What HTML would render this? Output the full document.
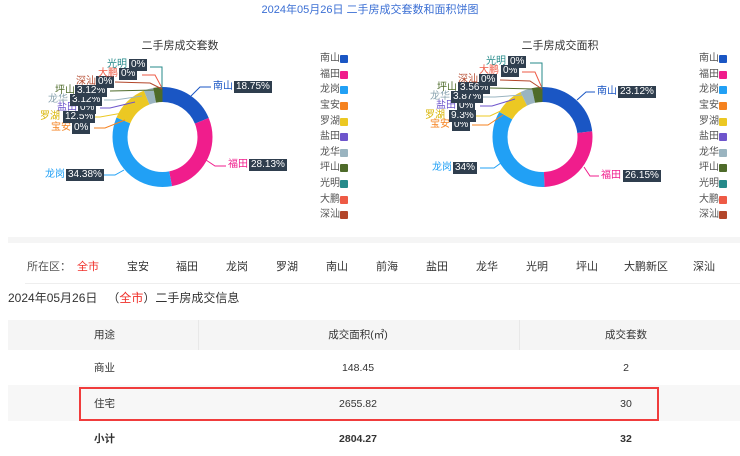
<!DOCTYPE html>
<html><head><meta charset="utf-8"><style>
body{margin:0;width:740px;height:456px;background:#fff;font-family:"Liberation Sans","Noto Sans CJK SC",sans-serif;position:relative;overflow:hidden;color:#333}
.a{position:absolute;white-space:nowrap;font-size:10px;line-height:12px}
.b{position:absolute;background:#2f3e4e;color:#fff;font-size:10px;line-height:12px;padding:0 2px;white-space:nowrap}
.lg{position:absolute;font-size:10px;color:#555;line-height:12px}
.sq{position:absolute;width:8px;height:8px;border-radius:1px}
.f{position:absolute;top:258px;font-size:11px;color:#333}
</style></head><body>
<div class="a" style="left:0;width:740px;text-align:center;top:4px;font-size:11px;color:#3b6fd4">2024年05月26日 二手房成交套数和面积饼图</div>
<div class="a" style="left:140px;width:80px;text-align:center;top:40px;font-size:11px;color:#333">二手房成交套数</div>
<div class="a" style="left:520px;width:80px;text-align:center;top:40px;font-size:11px;color:#333">二手房成交面积</div>

<svg width="740" height="240" style="position:absolute;left:0;top:0">
<g transform="rotate(-90 162.5 137)" fill="none" stroke-width="15">
<circle cx="162.5" cy="137" r="42.5" stroke="#1a56c4" stroke-dasharray="50.07 300" stroke-dashoffset="0"/>
<circle cx="162.5" cy="137" r="42.5" stroke="#f01d8c" stroke-dasharray="75.12 300" stroke-dashoffset="-50.07"/>
<circle cx="162.5" cy="137" r="42.5" stroke="#21a0f5" stroke-dasharray="91.81 300" stroke-dashoffset="-125.19"/>
<circle cx="162.5" cy="137" r="42.5" stroke="#ecc823" stroke-dasharray="33.38 300" stroke-dashoffset="-217.0"/>
<circle cx="162.5" cy="137" r="42.5" stroke="#9ab4c0" stroke-dasharray="8.33 300" stroke-dashoffset="-250.38"/>
<circle cx="162.5" cy="137" r="42.5" stroke="#4e6b2a" stroke-dasharray="8.33 300" stroke-dashoffset="-258.71"/>
</g>
<g transform="rotate(-90 542.5 137)" fill="none" stroke-width="15">
<circle cx="542.5" cy="137" r="42.5" stroke="#1a56c4" stroke-dasharray="61.74 300" stroke-dashoffset="0"/>
<circle cx="542.5" cy="137" r="42.5" stroke="#f01d8c" stroke-dasharray="69.83 300" stroke-dashoffset="-61.74"/>
<circle cx="542.5" cy="137" r="42.5" stroke="#21a0f5" stroke-dasharray="90.79 300" stroke-dashoffset="-131.57"/>
<circle cx="542.5" cy="137" r="42.5" stroke="#ecc823" stroke-dasharray="24.83 300" stroke-dashoffset="-222.36"/>
<circle cx="542.5" cy="137" r="42.5" stroke="#9ab4c0" stroke-dasharray="10.33 300" stroke-dashoffset="-247.19"/>
<circle cx="542.5" cy="137" r="42.5" stroke="#4e6b2a" stroke-dasharray="9.51 300" stroke-dashoffset="-257.52"/>
</g>
<g fill="none" stroke-width="1">
<polyline points="191,96 200,87 211,87" stroke="#1a56c4"/>
<polyline points="206,160 215,166 226,166" stroke="#f01d8c"/>
<polyline points="124,170 115,175 104,175" stroke="#21a0f5"/>
<polyline points="125,120 105,128 94,128" stroke="#f5821f"/>
<polyline points="128,112 100,117 95,117" stroke="#ecc823"/>
<polyline points="135,102 110,108 100,108" stroke="#6e55cc"/>
<polyline points="142,96 115,100 104,100" stroke="#9ab4c0"/>
<polyline points="155,90 110,91" stroke="#4e6b2a"/>
<polyline points="162,89 150,83 115,82" stroke="#b3462a"/>
<polyline points="162,88 155,75 142,75" stroke="#ee5a45"/>
<polyline points="162,88 162,67 150,67" stroke="#268a8a"/>
<polyline points="577,100 586,92 595,92" stroke="#1a56c4"/>
<polyline points="584,167 590,176 599,176" stroke="#f01d8c"/>
<polyline points="505,160 494,168 480,168" stroke="#21a0f5"/>
<polyline points="503,115 488,125 472,125" stroke="#f5821f"/>
<polyline points="507,108 490,116 475,116" stroke="#ecc823"/>
<polyline points="515,99 492,106 480,106" stroke="#6e55cc"/>
<polyline points="522,95 495,97 483,97" stroke="#9ab4c0"/>
<polyline points="535,89 490,88" stroke="#4e6b2a"/>
<polyline points="542,89 530,81 500,80" stroke="#b3462a"/>
<polyline points="542,88 535,72 522,72" stroke="#ee5a45"/>
<polyline points="542,88 542,63 530,63" stroke="#268a8a"/>
</g>
</svg>

<span class="a" style="left:213px;top:81px;color:#1a56c4">南山</span><span class="b" style="left:234px;top:81px">18.75%</span>
<span class="a" style="left:228px;top:159px;color:#f01d8c">福田</span><span class="b" style="left:249px;top:159px">28.13%</span>
<span class="a" style="left:45px;top:169px;color:#21a0f5">龙岗</span><span class="b" style="left:66px;top:169px">34.38%</span>
<span class="a" style="left:51px;top:122px;color:#f5821f">宝安</span><span class="b" style="left:72px;top:122px">0%</span>
<span class="a" style="left:40px;top:111px;color:#d8b400">罗湖</span><span class="b" style="left:63px;top:111px">12.5%</span>
<span class="a" style="left:57px;top:102px;color:#6e55cc">盐田</span><span class="b" style="left:78px;top:102px">0%</span>
<span class="a" style="left:48px;top:94px;color:#8aa4b0">龙华</span><span class="b" style="left:70px;top:94px">3.12%</span>
<span class="a" style="left:55px;top:85px;color:#4e6b2a">坪山</span><span class="b" style="left:75px;top:85px">3.12%</span>
<span class="a" style="left:76px;top:76px;color:#b3462a">深汕</span><span class="b" style="left:96px;top:76px">0%</span>
<span class="a" style="left:98px;top:68px;color:#ee5a45">大鹏</span><span class="b" style="left:119px;top:68px">0%</span>
<span class="a" style="left:107px;top:59px;color:#268a8a">光明</span><span class="b" style="left:129px;top:59px">0%</span>

<span class="a" style="left:597px;top:86px;color:#1a56c4">南山</span><span class="b" style="left:618px;top:86px">23.12%</span>
<span class="a" style="left:601px;top:170px;color:#f01d8c">福田</span><span class="b" style="left:623px;top:170px">26.15%</span>
<span class="a" style="left:432px;top:162px;color:#21a0f5">龙岗</span><span class="b" style="left:453px;top:162px">34%</span>
<span class="a" style="left:430px;top:119px;color:#f5821f">宝安</span><span class="b" style="left:452px;top:119px">0%</span>
<span class="a" style="left:425px;top:110px;color:#d8b400">罗湖</span><span class="b" style="left:449px;top:110px">9.3%</span>
<span class="a" style="left:436px;top:100px;color:#6e55cc">盐田</span><span class="b" style="left:457px;top:100px">0%</span>
<span class="a" style="left:430px;top:91px;color:#8aa4b0">龙华</span><span class="b" style="left:451px;top:91px">3.87%</span>
<span class="a" style="left:437px;top:82px;color:#4e6b2a">坪山</span><span class="b" style="left:458px;top:82px">3.56%</span>
<span class="a" style="left:458px;top:74px;color:#b3462a">深汕</span><span class="b" style="left:479px;top:74px">0%</span>
<span class="a" style="left:479px;top:65px;color:#ee5a45">大鹏</span><span class="b" style="left:501px;top:65px">0%</span>
<span class="a" style="left:486px;top:56px;color:#268a8a">光明</span><span class="b" style="left:508px;top:56px">0%</span>

<div class="lg" style="left:320px;top:53px">南山</div><div class="sq" style="left:340px;top:55px;background:#1a56c4"></div>
<div class="lg" style="left:320px;top:69px">福田</div><div class="sq" style="left:340px;top:71px;background:#f01d8c"></div>
<div class="lg" style="left:320px;top:84px">龙岗</div><div class="sq" style="left:340px;top:86px;background:#21a0f5"></div>
<div class="lg" style="left:320px;top:100px">宝安</div><div class="sq" style="left:340px;top:102px;background:#f5821f"></div>
<div class="lg" style="left:320px;top:116px">罗湖</div><div class="sq" style="left:340px;top:118px;background:#ecc823"></div>
<div class="lg" style="left:320px;top:131px">盐田</div><div class="sq" style="left:340px;top:133px;background:#6e55cc"></div>
<div class="lg" style="left:320px;top:147px">龙华</div><div class="sq" style="left:340px;top:149px;background:#9ab4c0"></div>
<div class="lg" style="left:320px;top:162px">坪山</div><div class="sq" style="left:340px;top:164px;background:#4e6b2a"></div>
<div class="lg" style="left:320px;top:178px">光明</div><div class="sq" style="left:340px;top:180px;background:#268a8a"></div>
<div class="lg" style="left:320px;top:194px">大鹏</div><div class="sq" style="left:340px;top:196px;background:#ee5a45"></div>
<div class="lg" style="left:320px;top:209px">深汕</div><div class="sq" style="left:340px;top:211px;background:#b3462a"></div>

<div class="lg" style="left:699px;top:53px">南山</div><div class="sq" style="left:719px;top:55px;background:#1a56c4"></div>
<div class="lg" style="left:699px;top:69px">福田</div><div class="sq" style="left:719px;top:71px;background:#f01d8c"></div>
<div class="lg" style="left:699px;top:84px">龙岗</div><div class="sq" style="left:719px;top:86px;background:#21a0f5"></div>
<div class="lg" style="left:699px;top:100px">宝安</div><div class="sq" style="left:719px;top:102px;background:#f5821f"></div>
<div class="lg" style="left:699px;top:116px">罗湖</div><div class="sq" style="left:719px;top:118px;background:#ecc823"></div>
<div class="lg" style="left:699px;top:131px">盐田</div><div class="sq" style="left:719px;top:133px;background:#6e55cc"></div>
<div class="lg" style="left:699px;top:147px">龙华</div><div class="sq" style="left:719px;top:149px;background:#9ab4c0"></div>
<div class="lg" style="left:699px;top:162px">坪山</div><div class="sq" style="left:719px;top:164px;background:#4e6b2a"></div>
<div class="lg" style="left:699px;top:178px">光明</div><div class="sq" style="left:719px;top:180px;background:#268a8a"></div>
<div class="lg" style="left:699px;top:194px">大鹏</div><div class="sq" style="left:719px;top:196px;background:#ee5a45"></div>
<div class="lg" style="left:699px;top:209px">深汕</div><div class="sq" style="left:719px;top:211px;background:#b3462a"></div>

<div style="position:absolute;left:8px;top:237px;width:732px;height:6px;background:#f5f5f5"></div>

<span class="f" style="left:27px;color:#555">所在区：</span>
<span class="f" style="left:77px;color:#f0302a">全市</span>
<span class="f" style="left:127px">宝安</span>
<span class="f" style="left:176px">福田</span>
<span class="f" style="left:226px">龙岗</span>
<span class="f" style="left:276px">罗湖</span>
<span class="f" style="left:326px">南山</span>
<span class="f" style="left:376px">前海</span>
<span class="f" style="left:426px">盐田</span>
<span class="f" style="left:476px">龙华</span>
<span class="f" style="left:526px">光明</span>
<span class="f" style="left:576px">坪山</span>
<span class="f" style="left:624px">大鹏新区</span>
<span class="f" style="left:693px">深汕</span>
<div style="position:absolute;left:25px;top:283px;width:715px;height:1px;background:#eee"></div>

<div class="a" style="left:8px;top:291px;font-size:12px;line-height:14px;color:#333">2024年05月26日 &nbsp;&nbsp;（<span style="color:#f0302a">全市</span>）二手房成交信息</div>

<div style="position:absolute;left:8px;top:320px;width:732px;height:30px;background:#f5f5f5"></div>
<div style="position:absolute;left:198px;top:320px;width:1px;height:30px;background:#e8e8e8"></div>
<div style="position:absolute;left:519px;top:320px;width:1px;height:30px;background:#e8e8e8"></div>
<div style="position:absolute;left:8px;top:385px;width:732px;height:36px;background:#f7f7f7"></div>
<div style="position:absolute;left:79px;top:387px;width:576px;height:30px;border:2px solid #f03c3c"></div>

<span class="a" style="left:94px;top:329px;font-size:10.5px">用途</span>
<span class="a" style="left:298px;width:120px;text-align:center;top:329px;font-size:10.5px">成交面积(㎡)</span>
<span class="a" style="left:566px;width:120px;text-align:center;top:329px;font-size:10.5px">成交套数</span>
<span class="a" style="left:94px;top:362px;font-size:10.5px">商业</span>
<span class="a" style="left:298px;width:120px;text-align:center;top:362px;font-size:10.5px">148.45</span>
<span class="a" style="left:566px;width:120px;text-align:center;top:362px;font-size:10.5px">2</span>
<span class="a" style="left:94px;top:398px;font-size:10.5px">住宅</span>
<span class="a" style="left:298px;width:120px;text-align:center;top:398px;font-size:10.5px">2655.82</span>
<span class="a" style="left:566px;width:120px;text-align:center;top:398px;font-size:10.5px">30</span>
<span class="a" style="left:94px;top:433px;font-size:10.5px;font-weight:bold">小计</span>
<span class="a" style="left:298px;width:120px;text-align:center;top:433px;font-size:10.5px;font-weight:bold">2804.27</span>
<span class="a" style="left:566px;width:120px;text-align:center;top:433px;font-size:10.5px;font-weight:bold">32</span>
</body></html>
